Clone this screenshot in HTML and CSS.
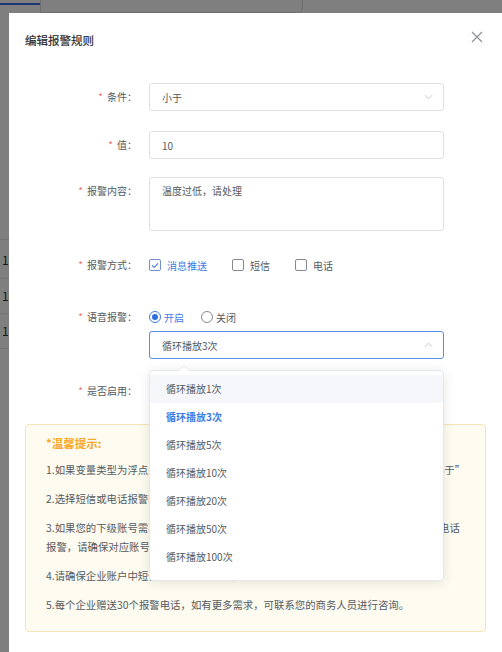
FILE: index.html
```html
<!DOCTYPE html>
<html lang="zh-CN">
<head>
<meta charset="utf-8">
<title>编辑报警规则</title>
<link rel="stylesheet" href="styles.css">
</head>
<body>
<div class="page">
  <div class="page-top">
    <div class="tab-line"></div>
    <div class="card-top"></div>
  </div>
  <div class="table">
    <div class="tr">10</div>
    <div class="tr">10</div>
    <div class="tr">10</div>
    <div class="tr"></div>
  </div>
</div>
<div class="mask"></div>
<div class="dialog">
  <div class="dialog-header">
    <span class="dialog-title">编辑报警规则</span>
    <span class="dialog-close">
      <svg viewBox="0 0 12 12" width="12" height="12"><path d="M1 1L11 11M11 1L1 11" stroke="#909399" stroke-width="1.3" fill="none"/></svg>
    </span>
  </div>
  <div class="dialog-body">
    <div class="form">
      <div class="form-item">
        <div class="form-label required">条件：</div>
        <div class="form-control">
          <div class="select">
            <span>小于</span>
            <svg class="chev" viewBox="0 0 10 6" width="9" height="6"><path d="M1 1L5 5L9 1" stroke="#c0c4cc" stroke-width="1" fill="none"/></svg>
          </div>
        </div>
      </div>
      <div class="form-item item-value">
        <div class="form-label required">值：</div>
        <div class="form-control">
          <div class="input">10</div>
        </div>
      </div>
      <div class="form-item item-content">
        <div class="form-label required">报警内容：</div>
        <div class="form-control">
          <div class="textarea">温度过低，请处理</div>
        </div>
      </div>
      <div class="form-item item-way">
        <div class="form-label required">报警方式：</div>
        <div class="form-control">
          <div class="check-group">
            <span class="check checked">
              <span class="check-box"><svg viewBox="0 0 11 11" width="11" height="11"><path d="M2.3 5.4L4.6 7.7L8.8 3.2" stroke="#3d7be6" stroke-width="1.2" fill="none"/></svg></span>
              <span class="check-text">消息推送</span>
            </span>
            <span class="check">
              <span class="check-box"></span>
              <span class="check-text">短信</span>
            </span>
            <span class="check">
              <span class="check-box"></span>
              <span class="check-text">电话</span>
            </span>
          </div>
        </div>
      </div>
      <div class="form-item item-voice">
        <div class="form-label required">语音报警：</div>
        <div class="form-control">
          <div class="radio-group">
            <span class="radio checked"><span class="radio-dot"></span><span class="radio-text">开启</span></span>
            <span class="radio"><span class="radio-dot"></span><span class="radio-text">关闭</span></span>
          </div>
          <div class="select-wrap">
            <div class="select focus">
              <span>循环播放3次</span>
              <svg class="chev" viewBox="0 0 10 6" width="9" height="6"><path d="M1 5L5 1L9 5" stroke="#c0c4cc" stroke-width="1" fill="none"/></svg>
            </div>
            <div class="dropdown">
              <span class="dropdown-arrow"></span>
              <ul class="options">
                <li class="hover">循环播放1次</li>
                <li class="selected">循环播放3次</li>
                <li>循环播放5次</li>
                <li>循环播放10次</li>
                <li>循环播放20次</li>
                <li>循环播放50次</li>
                <li>循环播放100次</li>
                <li>一直循环播放</li>
              </ul>
            </div>
          </div>
        </div>
      </div>
      <div class="form-item item-enable">
        <div class="form-label required">是否启用：</div>
        <div class="form-control"></div>
      </div>
    </div>
    <div class="tips">
      <div class="tips-title">*温馨提示:</div>
      <p>1.如果变量类型为浮点型，报警条件建议不要选择“等于”，请按需选择“大于”或“小于”</p>
      <p>2.选择短信或电话报警时，会消耗企业账户中的短信或电话余量。</p>
      <p>3.如果您的下级账号需要接收报警通知，请在系统设置的子账号管理中为其开启短信或电话报警，请确保对应账号已绑定手机号并完成实名认证。</p>
      <p>4.请确保企业账户中短信及电话余量充足，以免影响报警通知。</p>
      <p>5.每个企业赠送30个报警电话，如有更多需求，可联系您的商务人员进行咨询。</p>
    </div>
  </div>
</div>
</body>
</html>
```

FILE: styles.css
```css
* { box-sizing: border-box; }
html, body { margin: 0; padding: 0; }
body {
  width: 502px;
  height: 652px;
  overflow: hidden;
  background: #ffffff;
  font-family: "Noto Sans CJK SC", "Noto Sans", sans-serif;
  color: #555a60;
}

/* underlying page */
.page { height: 652px; }
.page-top { display: flex; height: 13px; }
.tab-line {
  width: 40px;
  height: 5px;
  border-bottom: 2px solid #3a6ee8;
}
.card-top {
  width: 263px;
  height: 13px;
  border: 1px solid #d8dbe2;
  border-top: none;
  border-radius: 0 0 5px 0;
}
.table { padding-top: 226px; }
.tr {
  height: 35px;
  border-top: 1px solid #e1e4ea;
  padding-left: 2px;
  font-size: 12px;
  line-height: 34px;
  color: #303133;
}
.tr:first-child { height: 39px; line-height: 40px; }

.mask {
  position: fixed;
  inset: 0;
  background: rgba(0, 0, 0, 0.5);
}

/* dialog */
.dialog {
  position: fixed;
  left: 9px;
  top: 13px;
  width: 493px;
  height: 660px;
  background: #ffffff;
}
.dialog-header {
  position: relative;
  padding: 19px 16px 0;
  height: 35px;
}
.dialog-title {
  display: block;
  font-size: 11.5px;
  line-height: 16px;
  color: #2a2c30;
  -webkit-text-stroke: 0.2px #2a2c30;
}
.dialog-close {
  position: absolute;
  right: 19px;
  top: 18px;
  width: 12px;
  height: 12px;
  display: flex;
}
.dialog-body { padding: 35px 16px 0; }

/* form */
.form-item {
  display: flex;
  align-items: flex-start;
  margin-left: -16px;
  margin-bottom: 20px;
}
.item-value { margin-bottom: 18px; }
.item-way { margin-bottom: 24px; }
.item-voice { margin-bottom: 18px; }
.item-enable { margin-bottom: 19px; }
.form-label {
  width: 140px;
  flex: none;
  padding-right: 12px;
  text-align: right;
  font-size: 10px;
  line-height: 28px;
  color: #555a60;
}
.form-label.required::before {
  content: "*";
  color: #f56c6c;
  margin-right: 4px;
}
.form-control {
  width: 295px;
  min-height: 28px;
  font-size: 10px;
}
.select, .input {
  height: 28px;
  border: 1px solid #dcdfe6;
  border-radius: 3px;
  padding: 0 10px 0 12px;
  display: flex;
  align-items: center;
  justify-content: space-between;
  color: #555a60;
  font-size: 10px;
  background: #fff;
}
.select.focus { border-color: #5b8de8; }
.chev { display: block; }
.textarea {
  height: 54px;
  border: 1px solid #dcdfe6;
  border-radius: 3px;
  padding: 5px 12px;
  line-height: 16px;
  font-size: 10px;
  color: #555a60;
}

/* checkbox */
.check-group, .radio-group {
  height: 28px;
  display: flex;
  align-items: center;
}
.check {
  display: flex;
  align-items: center;
  margin-right: 25px;
}
.check-box {
  width: 12px;
  height: 12px;
  border: 1px solid #85888e;
  border-radius: 2px;
  display: flex;
  align-items: center;
  justify-content: center;
  background: #fff;
}
.check-box svg { display: block; }
.check.checked .check-box { border-color: #6f8fcf; }
.check-text { margin-left: 6px; color: #555a60; }
.check.checked .check-text { color: #3d7be6; }

/* radio */
.radio {
  display: flex;
  align-items: center;
  margin-right: 17px;
}
.radio-dot {
  width: 12px;
  height: 12px;
  border: 1px solid #85888e;
  border-radius: 50%;
  display: flex;
  align-items: center;
  justify-content: center;
}
.radio.checked .radio-dot { border-color: #3d7be6; }
.radio.checked .radio-dot::after {
  content: "";
  width: 6px;
  height: 6px;
  border-radius: 50%;
  background: #2f6fe0;
}
.radio-text { margin-left: 3px; color: #555a60; }
.radio.checked .radio-text { color: #3d7be6; }

/* dropdown */
.select-wrap { position: relative; }
.dropdown {
  position: absolute;
  left: 0;
  top: 39px;
  width: 295px;
  height: 211px;
  background: #fff;
  border: 1px solid #e4e7ed;
  border-radius: 4px;
  box-shadow: 0 2px 12px rgba(0, 0, 0, 0.1);
  z-index: 2;
}
.dropdown-arrow {
  position: absolute;
  left: 28px;
  top: -6px;
  width: 0;
  height: 0;
  border-left: 6px solid transparent;
  border-right: 6px solid transparent;
  border-bottom: 6px solid #e4e7ed;
}
.dropdown-arrow::after {
  content: "";
  position: absolute;
  left: -5px;
  top: 1px;
  border-left: 5px solid transparent;
  border-right: 5px solid transparent;
  border-bottom: 5px solid #fff;
}
.options {
  list-style: none;
  margin: 0;
  padding: 4px 0 0;
  height: 209px;
  overflow: hidden;
  border-radius: 4px;
}
.options li {
  height: 28px;
  line-height: 28px;
  padding: 0 16px;
  font-size: 10px;
  color: #555a60;
}
.options li.hover { background: #f5f7fa; }
.options li.selected { color: #3d7be6; font-weight: bold; }

/* tips */
.tips {
  border: 1px solid #f5e4b8;
  background: #fefbf1;
  border-radius: 4px;
  padding: 10px 20px 17px;
  color: #555a60;
}
.tips-title {
  font-size: 11.5px;
  line-height: 16px;
  font-weight: bold;
  color: #f8a925;
  margin-bottom: 9px;
}
.tips p {
  margin: 0 0 10px;
  font-size: 10.4px;
  line-height: 19px;
}
.tips p:last-child { margin-bottom: 0; }
```
